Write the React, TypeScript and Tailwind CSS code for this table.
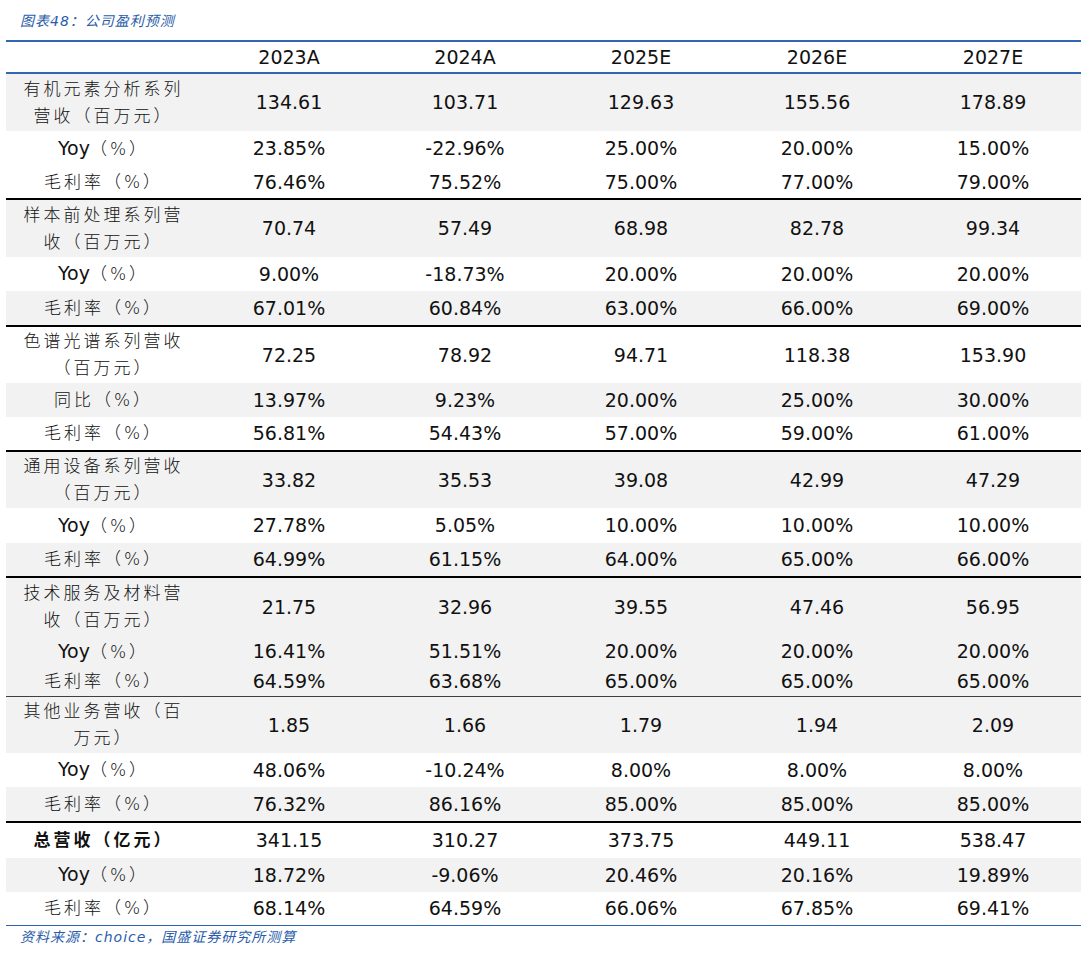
import React from "react";

type Row = {
  label: string[];
  values: string[];
  h: number;
  gray?: boolean;
  bold?: boolean;
};

type Group = {
  rows: Row[];
  border: string;
};

const years = ["2023A", "2024A", "2025E", "2026E", "2027E"];

const yoy = (values: string[], h: number, gray?: boolean, label = "Yoy"): Row => ({
  label: [label + "（%）"],
  values,
  h,
  gray,
});

const groups: Group[] = [
  {
    border: "border-b-2 border-black",
    rows: [
      { label: ["有机元素分析系列", "营收（百万元）"], values: ["134.61", "103.71", "129.63", "155.56", "178.89"], h: 57, gray: true },
      yoy(["23.85%", "-22.96%", "25.00%", "20.00%", "15.00%"], 35),
      yoy(["76.46%", "75.52%", "75.00%", "77.00%", "79.00%"], 32, false, "毛利率"),
    ],
  },
  {
    border: "border-b-2 border-black",
    rows: [
      { label: ["样本前处理系列营", "收（百万元）"], values: ["70.74", "57.49", "68.98", "82.78", "99.34"], h: 57, gray: true },
      yoy(["9.00%", "-18.73%", "20.00%", "20.00%", "20.00%"], 34),
      yoy(["67.01%", "60.84%", "63.00%", "66.00%", "69.00%"], 34, true, "毛利率"),
    ],
  },
  {
    border: "border-b-2 border-black",
    rows: [
      { label: ["色谱光谱系列营收", "（百万元）"], values: ["72.25", "78.92", "94.71", "118.38", "153.90"], h: 56 },
      yoy(["13.97%", "9.23%", "20.00%", "25.00%", "30.00%"], 34, true, "同比"),
      yoy(["56.81%", "54.43%", "57.00%", "59.00%", "61.00%"], 33, false, "毛利率"),
    ],
  },
  {
    border: "border-b-2 border-black",
    rows: [
      { label: ["通用设备系列营收", "（百万元）"], values: ["33.82", "35.53", "39.08", "42.99", "47.29"], h: 56, gray: true },
      yoy(["27.78%", "5.05%", "10.00%", "10.00%", "10.00%"], 35),
      yoy(["64.99%", "61.15%", "64.00%", "65.00%", "66.00%"], 33, true, "毛利率"),
    ],
  },
  {
    border: "border-b border-[#404040]",
    rows: [
      { label: ["技术服务及材料营", "收（百万元）"], values: ["21.75", "32.96", "39.55", "47.46", "56.95"], h: 58, gray: true },
      yoy(["16.41%", "51.51%", "20.00%", "20.00%", "20.00%"], 31, true),
      yoy(["64.59%", "63.68%", "65.00%", "65.00%", "65.00%"], 29, true, "毛利率"),
    ],
  },
  {
    border: "border-b-2 border-black",
    rows: [
      { label: ["其他业务营收（百", "万元）"], values: ["1.85", "1.66", "1.79", "1.94", "2.09"], h: 56, gray: true },
      yoy(["48.06%", "-10.24%", "8.00%", "8.00%", "8.00%"], 34),
      yoy(["76.32%", "86.16%", "85.00%", "85.00%", "85.00%"], 34, true, "毛利率"),
    ],
  },
  {
    border: "border-b border-[#2f62ad]",
    rows: [
      { label: ["总营收（亿元）"], values: ["341.15", "310.27", "373.75", "449.11", "538.47"], h: 35, bold: true },
      yoy(["18.72%", "-9.06%", "20.46%", "20.16%", "19.89%"], 34, true),
      yoy(["68.14%", "64.59%", "66.06%", "67.85%", "69.41%"], 33, false, "毛利率"),
    ],
  },
];

const latin = "font-['DejaVu_Sans','Noto_Sans_CJK_SC',sans-serif]";

function Label({ lines, bold }: { lines: string[]; bold?: boolean }) {
  return (
    <div className={`flex flex-col items-center justify-center text-[17px] leading-[27px] tracking-[3px] text-[#111] ${bold ? "font-bold" : "font-light"}`}>
      {lines.map((l) => (
        <span key={l}>
          {l.startsWith("Yoy") ? (
            <>
              <span className="text-[19px] tracking-normal font-normal">Yoy</span>
              {l.slice(3)}
            </>
          ) : (
            l
          )}
        </span>
      ))}
    </div>
  );
}

export default function App() {
  return (
    <div className={`w-[1085px] h-[960px] bg-white ${latin}`}>
      <div className="h-[40px] pl-[20px] pt-[11px] text-[14px] italic text-[#2a5caa] tracking-[1px]">
        图表48：公司盈利预测
      </div>
      <div className="ml-[6px] w-[1075px]">
        <div className="grid h-[34px] grid-cols-[195px_repeat(5,176px)] border-y-2 border-[#3566b0] items-center text-[19px] text-[#111]">
          <div />
          {years.map((y) => (
            <div key={y} className="text-center">{y}</div>
          ))}
        </div>
        {groups.map((g, gi) => (
          <div key={gi} className={g.border}>
            {g.rows.map((r, ri) => (
              <div
                key={ri}
                style={{ height: r.h }}
                className={`grid grid-cols-[195px_repeat(5,176px)] items-center ${r.gray ? "bg-[#f2f2f2]" : "bg-white"}`}
              >
                <Label lines={r.label} bold={r.bold} />
                {r.values.map((v, vi) => (
                  <div key={vi} className="text-center text-[19px] text-[#111]">
                    {v}
                  </div>
                ))}
              </div>
            ))}
          </div>
        ))}
      </div>
      <div className="pl-[20px] pt-[1px] text-[14px] italic text-[#2a5caa] tracking-[1px]">
        资料来源：choice，国盛证券研究所测算
      </div>
    </div>
  );
}
